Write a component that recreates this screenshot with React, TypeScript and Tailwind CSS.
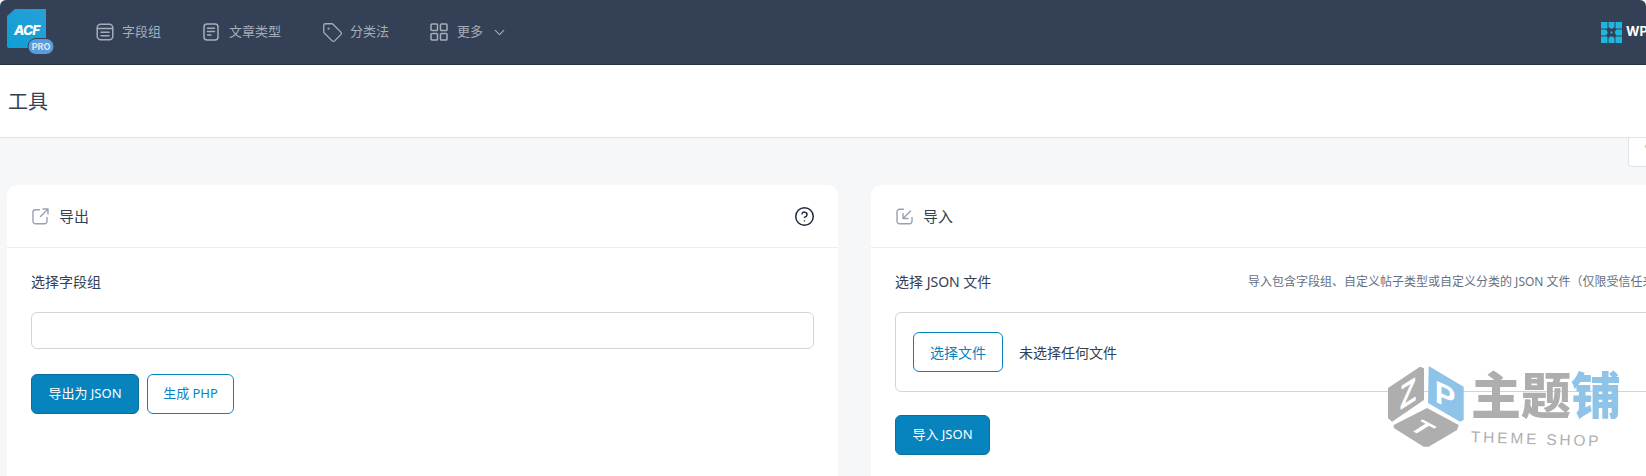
import { ChevronDown, CircleHelp, Tag } from 'lucide-react';

// field groups icon
function ListBoxIcon() {
  return (
    <svg width="18" height="18" viewBox="0 0 18 18" fill="none" stroke="currentColor" strokeWidth="1.5" strokeLinecap="round">
      <rect x="1.2" y="1.2" width="15.6" height="15.6" rx="3.5" />
      <path d="M1.5 5.6h15M5 9.2h8M5 12.8h8" />
    </svg>
  );
}

function DocIcon() {
  return (
    <svg width="16" height="18" viewBox="0 0 16 18" fill="none" stroke="currentColor" strokeWidth="1.5" strokeLinecap="round">
      <rect x="1" y="1" width="14" height="16" rx="3" />
      <path d="M4.5 5.2h7M4.5 8.6h7M4.5 12h3.5" />
    </svg>
  );
}

function GridIcon() {
  return (
    <svg width="18" height="18" viewBox="0 0 18 18" fill="none" stroke="currentColor" strokeWidth="1.5">
      <rect x="1" y="1" width="6.500" height="6.500" rx="0.800" />
      <rect x="10.500" y="1" width="6.500" height="6.500" rx="0.800" />
      <rect x="1" y="10.500" width="6.500" height="6.500" rx="0.800" />
      <rect x="10.500" y="10.500" width="6.500" height="6.500" rx="0.800" />
    </svg>
  );
}

function ExportIcon() {
  return (
    <svg width="17" height="17" viewBox="0 0 17 17" fill="none" stroke="#98a2b3" strokeWidth="1.4" strokeLinecap="round" strokeLinejoin="round">
      <path d="M7.5 1.7H3.5a2.5 2.5 0 0 0-2.5 2.5v9a2.5 2.5 0 0 0 2.5 2.5h9a2.5 2.5 0 0 0 2.5-2.5V9.5" />
      <path d="M8.5 8.5 16 1M11 1h5v5" />
    </svg>
  );
}

function ImportIcon() {
  return (
    <svg width="17" height="17" viewBox="0 0 17 17" fill="none" stroke="#98a2b3" strokeWidth="1.4" strokeLinecap="round" strokeLinejoin="round">
      <path d="M7.5 1.2H3.5A2.5 2.5 0 0 0 1 3.7v9.5a2.5 2.5 0 0 0 2.5 2.5h10a2.5 2.5 0 0 0 2.5-2.5V9.5" />
      <path d="M14.5 3 7 10.5M7 5.5v5h5" />
    </svg>
  );
}

function AcfLogo() {
  return (
    <svg width="47" height="46" viewBox="0 0 47 46" className="shrink-0">
      <defs>
        <linearGradient id="acf" x1="0" y1="1" x2="1" y2="0">
          <stop offset="0" stopColor="#0d9fd6" />
          <stop offset="1" stopColor="#2a9fd8" />
        </linearGradient>
      </defs>
      <path d="M0 7 8 0h31v39H2a2 2 0 0 1-2-2z" fill="url(#acf)" />
      <text x="7" y="25.5" fill="#fff" fontSize="13.5" fontWeight="800" fontStyle="italic" fontFamily="Inter, sans-serif" letterSpacing="-0.8">ACF</text>
      <rect x="21" y="29.5" width="26" height="16" rx="8" fill="#5c9bdb" stroke="#344055" strokeWidth="1" />
      <text x="34" y="41" fill="#dbe9f7" fontSize="9" fontWeight="700" textAnchor="middle" fontFamily="Inter, sans-serif">PRO</text>
    </svg>
  );
}

function WpLogo() {
  return (
    <svg width="21" height="21" viewBox="0 0 21 21" className="shrink-0">
      <path d="M0 0h6.500v6.500H0zM7.500 0h6v5l-2 1.500h-2l-2-1.500zM14.500 0H21v6.500h-6.500zM0 7.500h5l1.500 2v2l-1.500 2H0zM15.500 7.500H21v6h-5.500l-1.500-2v-2zM0 14.500h6.500V21H0zM7.500 16l2-1.500h2l2 1.500v5h-6zM14.500 14.500H21V21h-6.500z" fill="#1fb6dd" />
      <rect x="9.500" y="9.500" width="2" height="2" fill="#1fb6dd" />
    </svg>
  );
}

function Watermark() {
  return (
    <div className="absolute left-[1387px] top-[365px] flex items-start gap-[7px] pointer-events-none">
      <svg width="77" height="83" viewBox="0 0 77 83" className="shrink-0">
        <path d="M33 1.700 37 3.300V35L5 56.700 1 53V23z" fill="#aeaeae" strokeLinejoin="round" />
        <path d="M41.700 1 76.700 21.700V55L73 56.700 41 38z" fill="#8fc3e8" />
        <path d="M40 43 71.700 60 70 65 41.700 81.700H36.700L6.700 63V60z" fill="#aeaeae" />
        <g transform="translate(21 28) skewY(-32) scale(0.8 1)">
          <text x="0" y="12" fill="#fff" fontSize="34" fontWeight="700" textAnchor="middle" fontFamily="Liberation Sans, sans-serif">Z</text>
        </g>
        <g transform="translate(58 30) skewY(24)">
          <text x="0" y="11" fill="#fff" fontSize="31" fontWeight="700" textAnchor="middle" fontFamily="Liberation Sans, sans-serif">P</text>
        </g>
        <g transform="translate(35 63) rotate(28) skewX(-30) scale(1 0.8)">
          <text x="0" y="9" fill="#fff" fontSize="27" fontWeight="700" textAnchor="middle" fontFamily="Liberation Sans, sans-serif">T</text>
        </g>
      </svg>
      <div className="flex flex-col">
        <div className="flex text-[50px] leading-[50px] font-black whitespace-nowrap mt-[5px]">
          <span className="text-[#aeaeae]">主题</span>
          <span className="text-[#8fc3e8]">铺</span>
        </div>
        <span className="text-[15.500px] leading-[18px] mt-[8px] text-[#aeaeae] tracking-[2.800px] whitespace-nowrap rotate-[2deg] origin-left font-['Liberation_Sans',sans-serif]">THEME SHOP</span>
      </div>
    </div>
  );
}

export default function App() {
  return (
    <div className="relative h-[476px] w-[1646px] overflow-hidden bg-[#f6f7f9] text-[#344054] font-['Noto_Sans','Noto_Sans_CJK_SC',sans-serif]">
      {/* Top nav */}
      <nav className="flex h-[65px] items-center bg-[#344055] border-b border-[#252f40] pl-[7px] pr-0 text-[13px] text-[#a5adbb] rounded-t-[6px]">
        <AcfLogo />
        <div className="ml-[42px] flex items-center gap-[8px]">
          <ListBoxIcon />
          <span>字段组</span>
        </div>
        <div className="ml-[42px] flex items-center gap-[10px]">
          <DocIcon />
          <span>文章类型</span>
        </div>
        <div className="ml-[41px] flex items-center gap-[7px]">
          <Tag size={21} strokeWidth={1.5} />
          <span>分类法</span>
        </div>
        <div className="ml-[41px] flex items-center gap-[9px]">
          <GridIcon />
          <span>更多</span>
          <ChevronDown size={17} strokeWidth={1.6} className="-ml-[1px]" />
        </div>
        <div className="ml-auto flex items-center gap-[4px] w-[45px] overflow-hidden text-[13px] font-bold text-white">
          <WpLogo />
          <span className="font-['Inter',sans-serif]">WP</span>
        </div>
      </nav>

      {/* Page title */}
      <header className="flex h-[73px] items-center bg-white border-b border-[#dfe2e7] pl-[8px] pt-[2px]">
        <h1 className="text-[20px] font-normal leading-none text-[#344054]">工具</h1>
      </header>

      {/* Screen options tab */}
      <div className="absolute right-0 top-[138px] h-[29px] w-[18px] bg-white border border-t-0 border-r-0 border-[#dfe2e7] rounded-bl-[4px]">
        <span className="absolute right-0 top-[7px] h-[3px] w-[1px] bg-[#f0c98a]" />
      </div>

      {/* Cards */}
      <main className="flex items-stretch gap-[33px] pl-[7px] pt-[47px] h-[338px] w-[1740px]">
        <section className="w-[831px] shrink-0 rounded-t-[10px] bg-white">
          <div className="flex h-[63px] items-center gap-[10px] border-b border-[#eaecf0] pl-[25px] pr-[23px] text-[15px] text-[#344054]">
            <ExportIcon />
            <span>导出</span>
            <CircleHelp size={21} strokeWidth={1.7} className="ml-auto text-[#1f2937]" />
          </div>
          <div className="px-[24px] pt-[24px]">
            <div className="h-[20px] text-[14px] leading-[20px]">选择字段组</div>
            <div className="mt-[20px] h-[37px] rounded-[6px] border border-[#d0d5dd] bg-white" />
            <div className="mt-[25px] flex gap-[8px]">
              <button className="h-[40px] w-[108px] rounded-[6px] bg-[#0783be] border border-[#0a6f9f] text-[13px] text-white">导出为 JSON</button>
              <button className="h-[40px] w-[87px] rounded-[6px] bg-white border border-[#0783be] text-[13px] text-[#0783be]">生成 PHP</button>
            </div>
          </div>
        </section>

        <section className="w-[831px] shrink-0 rounded-t-[10px] bg-white">
          <div className="flex h-[63px] items-center gap-[10px] border-b border-[#eaecf0] pl-[25px] text-[15px] text-[#344054]">
            <ImportIcon />
            <span>导入</span>
          </div>
          <div className="px-[24px] pt-[24px]">
            <div className="flex h-[20px] items-center">
              <span className="w-[353px] shrink-0 text-[14px] leading-[20px]">选择 JSON 文件</span>
              <span className="whitespace-nowrap text-[12px] text-[#667085]">导入包含字段组、自定义帖子类型或自定义分类的 JSON 文件（仅限受信任来源）。</span>
            </div>
            <div className="mt-[20px] flex h-[80px] items-center gap-[16px] rounded-[6px] border border-[#d0d5dd] bg-white pl-[17px]">
              <button className="h-[40px] w-[90px] rounded-[6px] bg-white border border-[#0783be] text-[14px] text-[#0783be]">选择文件</button>
              <span className="text-[14px]">未选择任何文件</span>
            </div>
            <button className="mt-[23px] h-[40px] w-[95px] rounded-[6px] bg-[#0783be] border border-[#0a6f9f] text-[13px] text-white">导入 JSON</button>
          </div>
        </section>
      </main>

      <Watermark />
    </div>
  );
}
